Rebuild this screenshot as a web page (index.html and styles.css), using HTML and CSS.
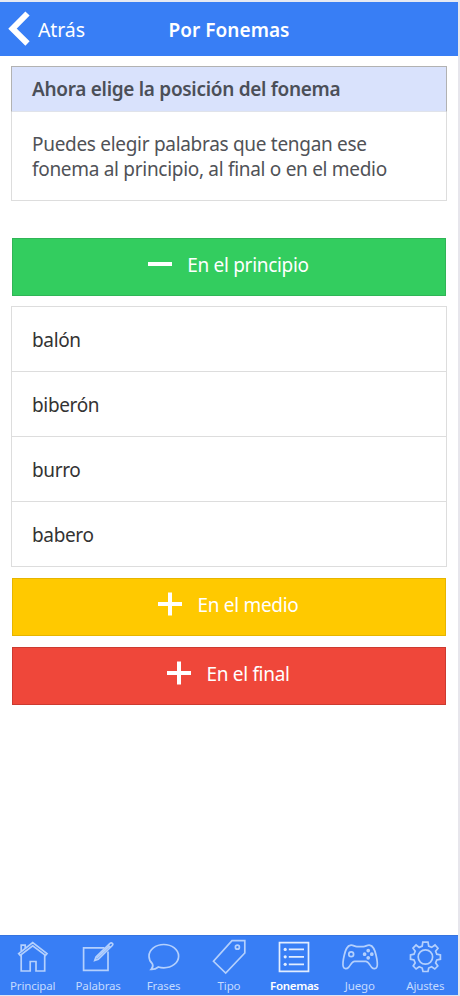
FILE: index.html
```
<!DOCTYPE html>
<html lang="es">
<head>
<meta charset="utf-8">
<title>Por Fonemas</title>
<link rel="stylesheet" href="styles.css">
</head>
<body>
<div class="app">
  <header class="bar">
    <div class="back">
      <svg class="chevron" viewBox="0 0 22 36"><path d="M19.5 2.5 4.5 17.7 19.5 32.5"/></svg>
      <span class="back-label">Atrás</span>
    </div>
    <h1 class="title">Por Fonemas</h1>
  </header>
  <main class="content">
    <section class="card">
      <h2 class="card-head">Ahora elige la posición del fonema</h2>
      <p class="card-body">Puedes elegir palabras que tengan ese<br>fonema al principio, al final o en el medio</p>
    </section>
    <div class="button green">
      <svg class="sign" viewBox="0 0 24 24"><path d="M0 12H24"/></svg>
      <span>En el principio</span>
    </div>
    <ul class="list">
      <li>balón</li>
      <li>biberón</li>
      <li>burro</li>
      <li>babero</li>
    </ul>
    <div class="button yellow">
      <svg class="sign" viewBox="0 0 24 24"><path d="M0 12H24M12 .5V23.5"/></svg>
      <span>En el medio</span>
    </div>
    <div class="button red">
      <svg class="sign" viewBox="0 0 24 24"><path d="M0 12H24M12 .5V23.5"/></svg>
      <span>En el final</span>
    </div>
  </main>
  <nav class="tabs">
    <div class="tab">
      <svg viewBox="0 0 34 34"><path d="M2.7 13.6 16.7 2.5 31 13.6 29.5 15.4 16.7 5.8 4.2 15.4ZM5.2 11.5V5.2H9.2V8.3M5.2 15V31H14.2V21.5H20V31H28.7V15"/></svg>
      <span>Principal</span>
    </div>
    <div class="tab">
      <svg viewBox="0 0 34 34"><path d="M23.5 7.9H2.6V30.3H27V11.5"/><path d="M13.8 20.4 15 17 29 3.3Q30.2 2.3 31.3 3.3T31.3 5.5L17.3 19.3ZM27 5.2 29.4 7.5"/><path d="M15.5 18.3 28 6.3"/></svg>
      <span>Palabras</span>
    </div>
    <div class="tab">
      <svg viewBox="0 0 34 34"><path d="M4.2 29.4C6 27.6 6.2 25.5 5.3 23.7C3.2 21.6 2 19 2 16.2C2 9.7 8.6 4.5 16.8 4.5S31.6 9.7 31.6 16.2 25 27.8 16.8 27.8C14.8 27.8 13 27.5 11.4 27C9.4 28.6 7 29.5 4.2 29.4Z"/></svg>
      <span>Frases</span>
    </div>
    <div class="tab">
      <svg viewBox="0 0 34 34"><path d="M20 .7H32.8V13L13.7 33 1.5 21.3Z"/><circle cx="25.4" cy="7.2" r="2"/></svg>
      <span>Tipo</span>
    </div>
    <div class="tab active">
      <svg viewBox="0 0 34 34"><path d="M2.5 2.7H31.5V31.3H2.5ZM11.8 9.4H27M11.8 16.8H27M11.8 24.3H27"/><g class="dots"><circle cx="8.2" cy="9.4" r="1.6"/><circle cx="8.2" cy="16.8" r="1.6"/><circle cx="8.2" cy="24.3" r="1.6"/></g></svg>
      <span>Fonemas</span>
    </div>
    <div class="tab">
      <svg viewBox="0 0 34 34"><path d="M8 5.2C10.3 5 11.7 6.6 13.8 6.6H20.5C22.6 6.6 24 5 26.3 5.2C30.5 5.6 31.8 10 33 15C34.1 19.6 34.9 24 34 26.7C33.2 29 30.6 29.3 28.7 27.3C26.7 25.2 25.5 21.3 22.8 21.3H11.5C8.8 21.3 7.6 25.2 5.6 27.3C3.7 29.3 1.1 29 .3 26.7C-.6 24 .2 19.6 1.3 15C2.5 10 3.8 5.6 8 5.2Z"/><circle cx="8.2" cy="14.3" r="2.4"/><circle cx="25.2" cy="10.6" r="1"/><circle cx="25.2" cy="17.8" r="1"/><circle cx="21.6" cy="14.2" r="1"/><circle cx="28.8" cy="14.2" r="1"/></svg>
      <span>Juego</span>
    </div>
    <div class="tab">
      <svg viewBox="0 0 34 34"><path d="M14.8 2.2H20L20.7 6.1 23.7 7.4 27 5 30 8.2 27.6 11.2 28.8 14.2 32.4 15V19.2L28.8 19.9 27.6 22.8 29.8 26 26.8 29 23.6 26.8 20.7 28 20 31.5H15L14.2 28 11.2 26.8 8.1 29 5.2 26 7.2 22.8 6 19.9 2.5 19.2V15L6 14.2 7.2 11.2 5 8.2 8.1 5 11.2 7.4 14.2 6.1Z"/><circle cx="17.4" cy="17" r="7.2"/></svg>
      <span>Ajustes</span>
    </div>
  </nav>
</div>
</body>
</html>
```
FILE: styles.css
```
* { box-sizing: border-box; margin: 0; padding: 0; }
body { background: #fff; font-family: "Noto Sans", "Open Sans", sans-serif; }
.app {
  width: 460px; height: 996px; display: flex; flex-direction: column;
  border-top: 2px solid #e6e9f2; border-right: 2px solid #e7e6ec; border-bottom: 1px solid #dfe5f3;
}
.bar {
  height: 54px; background: #387ef5; color: #fff; display: grid;
  grid-template-columns: 140px 178px 140px; align-items: center; flex: none;
}
.back { display: flex; align-items: center; padding-left: 8px; }
.chevron { width: 22px; height: 36px; fill: none; stroke: #fff; stroke-width: 6; }
.back-label { font-size: 19.5px; letter-spacing: -.1px; margin-left: 8px; line-height: 26px; padding-top: 2px; }
.title { font-size: 19px; font-weight: 600; text-align: center; letter-spacing: .05px; padding-top: 2px; line-height: 26px; white-space: nowrap; }
.content { flex: 1; padding: 10px 11px 0; }
.card { border: 1px solid #ddd; border-top: 0; height: 135px; color: #505257; }
.card-head {
  margin: 0 -1px; height: 46px; padding-left: 20px; border: 1px solid #b2b2b2; border-bottom-color: #e0e3ea;
  background: #d9e2fc; color: #4b4f58;
  font-size: 19px; font-weight: 600; line-height: 45px; letter-spacing: -.3px; white-space: nowrap;
}
.card-body { padding: 20px 0 0 20px; font-size: 19px; line-height: 24.5px; letter-spacing: -.3px; white-space: nowrap; }
.button {
  height: 58px; margin: 0 1px; display: flex; align-items: center; justify-content: center; color: #fff;
  border: 1px solid; font-size: 19px; letter-spacing: -.3px; gap: 15px; padding: 0 1px 4px 0;
}
.sign { width: 24px; height: 24px; fill: none; stroke: #fff; stroke-width: 4; margin-bottom: 2px; }
.green { background: #33cd5f; border-color: #30b556; margin-top: 37px; }
.yellow { background: #ffc900; border-color: #e6b500; margin-top: 11px; }
.red { background: #ef473a; border-color: #cc3a30; margin-top: 11px; }
.list { list-style: none; border: 1px solid #ddd; margin-top: 10px; color: #333; font-size: 19px; letter-spacing: -.35px; height: 261px; }
.list li { height: 65px; padding-left: 20px; line-height: 66px; border-bottom: 1px solid #ddd; }
.list li:last-child { border-bottom: 0; }
.tabs { display: flex; height: 60px; background: #387ef5; flex: none; border-top: 1px solid #3574e0; }
.tab { flex: 1; display: flex; flex-direction: column; align-items: center; color: #c4daff; font-size: 11.5px; padding-top: 4px; }
.tab svg { width: 34px; height: 34px; overflow: visible; fill: none; stroke: #b4d0fd; stroke-width: 1.7; flex: none; }
.tab span { line-height: 14px; margin-top: 5px; letter-spacing: -.15px; white-space: nowrap; }
.active { color: #fff; font-weight: 600; }
.active span { letter-spacing: -.3px; }
.tab.active svg { stroke: #e2edff; }
.tab.active .dots { fill: #e2edff; stroke: none; }
```
